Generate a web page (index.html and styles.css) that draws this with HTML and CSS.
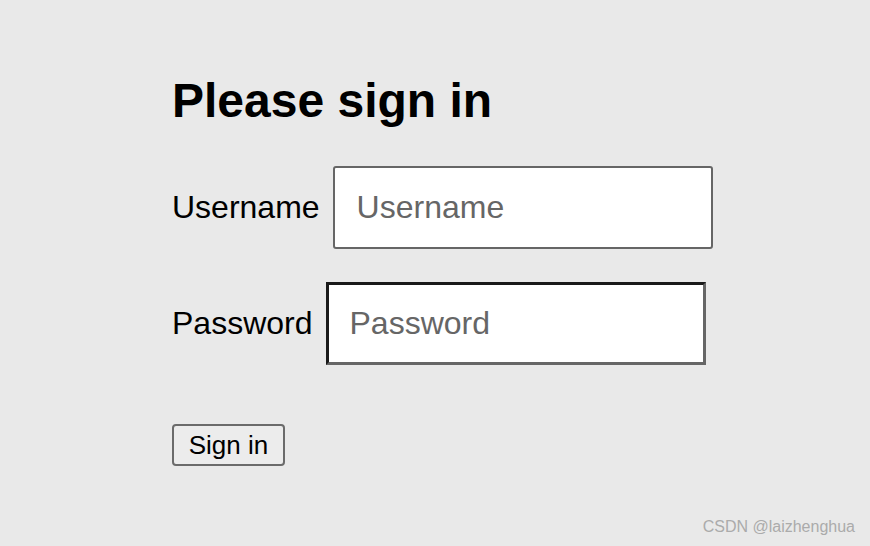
FILE: index.html
```html
<!DOCTYPE html>
<html lang="en">
<head>
  <meta charset="UTF-8" />
  <meta name="viewport" content="width=device-width, initial-scale=1.0"/>
  <title>Please sign in</title>
  <link rel="stylesheet" href="styles.css">
</head>
<body>
  <form class="signin">
    <h1>Please sign in</h1>

    <div class="row">
      <label for="username">Username</label>
      <input id="username" class="field" type="text" placeholder="Username">
    </div>

    <div class="row">
      <label for="password">Password</label>
      <input id="password" class="field field-focus" type="password" placeholder="Password">
    </div>

    <button class="submit" type="submit">Sign in</button>
  </form>

  <!-- watermark -->
  <div class="mark">CSDN @laizhenghua</div>
</body>
</html>
```

FILE: styles.css
```css
html, body {
  margin: 0;
  padding: 0;
  height: 100%;
  background: #e9e9e9;
  font-family: "Liberation Sans", Arial, sans-serif;
  color: #000;
}

body {
  position: relative;
  overflow: hidden;
}

.signin {
  padding: 73px 0 0 172px;
}

.signin h1 {
  margin: 0 0 37px;
  font-size: 48px;
  line-height: 56px;
  font-weight: bold;
}

.row {
  display: flex;
  align-items: center;
  gap: 13px;
  margin-bottom: 33px;
  font-size: 32px;
}

.field {
  box-sizing: border-box;
  width: 380px;
  height: 83px;
  padding: 0 22px;
  font-family: inherit;
  font-size: 32px;
  color: #000;
  background: #fff;
  border: 2px solid #666;
  border-radius: 3px;
  outline: none;
}

.field::placeholder {
  color: #666;
}

.field-focus {
  border: 3px solid;
  border-color: #1a1a1a #666 #666 #1a1a1a;
  border-radius: 0;
  padding-left: 21px;
}

.submit {
  margin-top: 26px;
  width: 113px;
  height: 42px;
  padding: 0;
  font-family: inherit;
  font-size: 26px;
  color: #000;
  background: #ececec;
  border: 2px solid #6b6b6b;
  border-radius: 4px;
  cursor: pointer;
}

.mark {
  position: absolute;
  right: 15px;
  bottom: 10px;
  font-size: 16px;
  color: #ababab;
}
```
